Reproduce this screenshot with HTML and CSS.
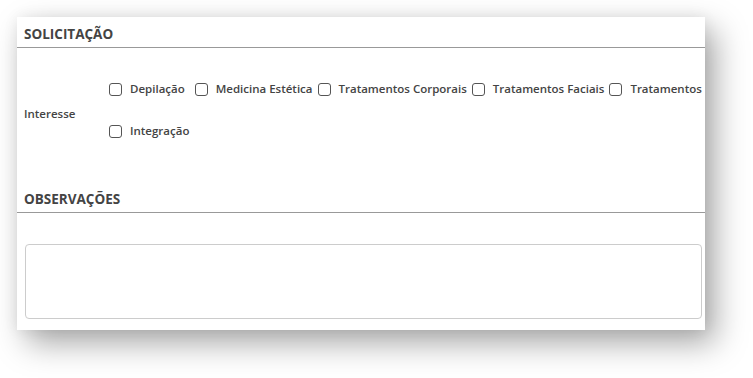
FILE: index.html
```
<!DOCTYPE html>
<html lang="pt-BR">
<head>
    <meta charset="UTF-8">
    <meta name="viewport" content="width=device-width, initial-scale=1.0">
    <title>Solicitação</title>
    <link rel="stylesheet" href="styles.css">
</head>
<body>
    <div class="panel">
        <h2 class="section-title">SOLICITAÇÃO</h2>
        <div class="field">
            <label class="field-label">Interesse</label>
            <div class="options">
                <label class="option"><input type="checkbox"> Depilação </label>
                <label class="option"><input type="checkbox"> Medicina Estética</label>
                <label class="option"><input type="checkbox"> Tratamentos Corporais</label>
                <label class="option"><input type="checkbox"> Tratamentos Faciais</label>
                <label class="option"><input type="checkbox"> Tratamentos</label>
                <label class="option"><input type="checkbox"> Integração</label>
            </div>
        </div>
        <h2 class="section-title">OBSERVAÇÕES</h2>
        <div class="notes">
            <textarea class="notes-box"></textarea>
        </div>
    </div>
</body>
</html>
```

FILE: styles.css
```
html {
    height: 100%;
    background: #fff;
}

body {
    box-sizing: border-box;
    min-height: 100vh;
    margin: 0;
    padding: 17px;
    background: #fff;
    font-family: "Open Sans", Arial, sans-serif;
    color: #444;
}

.panel {
    width: 688px;
    height: 313px;
    background: #fff;
    overflow: hidden;
    box-shadow: 10px 13px 30px rgba(0, 0, 0, 0.35), 0 0 14px rgba(0, 0, 0, 0.07);
}

.section-title {
    margin: 0;
    height: 30px;
    padding-left: 7px;
    line-height: 34px;
    font-size: 13.5px;
    font-weight: 700;
    color: #444;
    border-bottom: 1px solid #999;
}

.field {
    display: flex;
    align-items: center;
    padding: 20px 0 30px 7px;
}

.field-label {
    width: 86px;
    flex-shrink: 0;
    margin-top: 6px;
    font-size: 11.5px;
    font-weight: 600;
}

.options {
    flex: 0 0 612px;
    white-space: nowrap;
    display: flex;
    flex-wrap: wrap;
    line-height: 42px;
}

.option {
    display: flex;
    align-items: center;
    font-size: 11.5px;
    font-weight: 600;
    margin-right: 6px;
}

.option:first-child {
    margin-right: 11px;
}

.option input {
    appearance: none;
    width: 13px;
    height: 13px;
    margin: 0 8px 0 -1px;
    border: 1px solid #555;
    border-radius: 3px;
    background: #fff;
}

.notes {
    padding: 31px 3px 0 8px;
}

.notes-box {
    display: block;
    width: 100%;
    height: 75px;
    box-sizing: border-box;
    border: 1px solid #ccc;
    border-radius: 4px;
    resize: none;
}
```
